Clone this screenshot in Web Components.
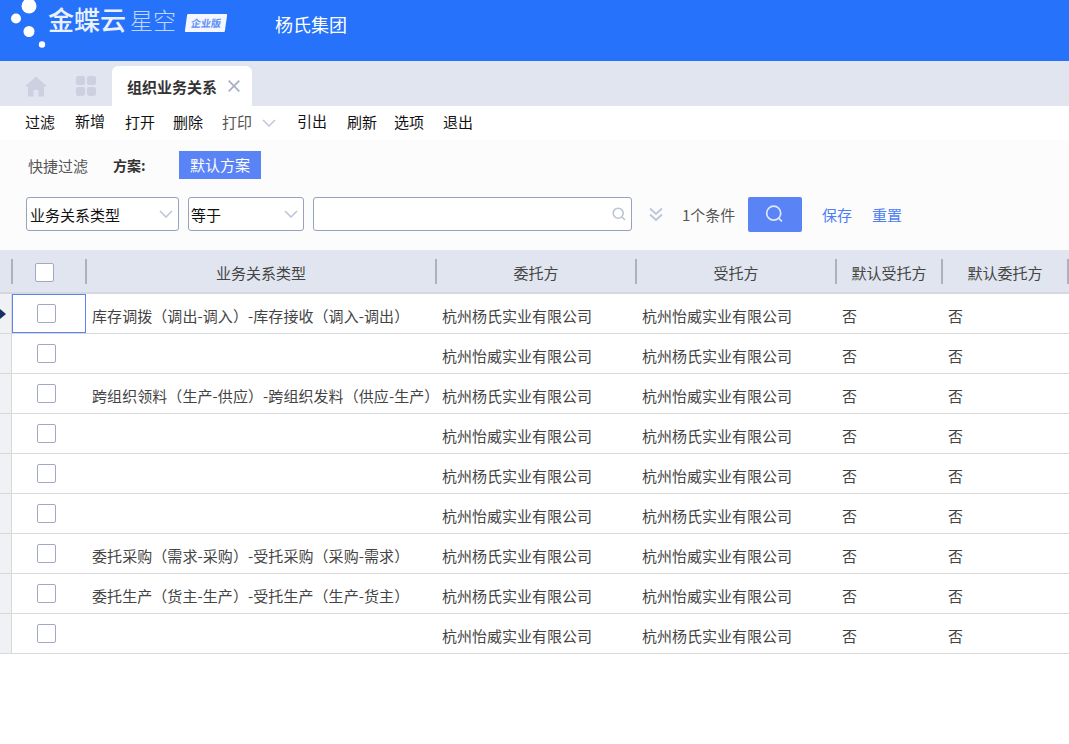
<!DOCTYPE html>
<html lang="zh-CN">
<head>
<meta charset="utf-8">
<title>组织业务关系</title>
<style>
  html, body { margin: 0; padding: 0; background: #fff; }
  body { font: 15px "Noto Sans CJK SC", "Liberation Sans", sans-serif; color: #333; width: 1069px; height: 744px; overflow: hidden; }
</style>
</head>
<body>
<app-header org="杨氏集团"></app-header>
<tab-bar title-text="组织业务关系"></tab-bar>
<tool-bar></tool-bar>
<filter-panel></filter-panel>
<data-grid></data-grid>

<script>
class AppHeader extends HTMLElement {
  connectedCallback() {
    this.attachShadow({ mode: "open" }).innerHTML = `
      <style>
        :host { display: flex; height: 61px; background: #2672fb; color: #fff; box-sizing: border-box; }
        .dots { width: 48px; height: 61px; flex: none; }
        .logo { display: flex; align-items: center; height: 42px; flex: none; }
        .jd { font-size: 26px; font-weight: 500; width: 82px; line-height: 36px; margin-top: -5px; white-space: nowrap; opacity: .9; }
        .xk { font-size: 23px; font-weight: 300; width: 56px; line-height: 36px; margin-top: -5px; white-space: nowrap; opacity: .7; }
        .badge { width: 40px; height: 18px; background: #f4f7ff; color: #5c8ff8; font-size: 10px; font-weight: 700; text-align: center; line-height: 18px; transform: skewX(-8deg); border-radius: 1px; white-space: nowrap; margin-top: 4px; }
        .org { font-size: 18px; margin-left: 49px; line-height: 49px; white-space: nowrap; }
      </style>
      <svg class="dots" viewBox="0 0 48 61" fill="#fff">
        <circle cx="29" cy="6" r="7.5"/><circle cx="16" cy="18.5" r="5"/><circle cx="29" cy="31.5" r="5.5"/><circle cx="42" cy="44.5" r="3.2"/>
      </svg>
      <div class="logo"><span class="jd">金蝶云</span><span class="xk">星空</span><span class="badge">企业版</span></div>
      <div class="org">${this.getAttribute("org")}</div>`;
  }
}

class TabBar extends HTMLElement {
  connectedCallback() {
    this.attachShadow({ mode: "open" }).innerHTML = `
      <style>
        :host { display: flex; height: 45px; background: #e1e5ef; box-sizing: border-box; padding: 5px 0 0 25px; }
        svg { display: block; flex: none; }
        .home { margin-top: 10px; }
        .apps { margin: 10px 0 0 29px; }
        .tab { margin-left: 16px; width: 140px; height: 40px; background: #fff; border-radius: 6px 6px 0 0; display: flex; align-items: center; padding-left: 15px; box-sizing: border-box; }
        .tab span { font-weight: 700; font-size: 15px; color: #333; width: 86px; white-space: nowrap; }
        .close { margin-left: 15px; }
      </style>
      <svg class="home" width="22" height="21" viewBox="0 0 22 21" fill="#ccd0e0"><path d="M11 0.5 L22 10.5 H19 V20.5 H13.5 V14 H8.5 V20.5 H3 V10.5 H0 Z"/></svg>
      <svg class="apps" width="20" height="20" viewBox="0 0 21 21" fill="#ccd0e0">
        <rect x="0" y="0" width="9.5" height="9.5" rx="2.5"/><rect x="11.5" y="0" width="9.5" height="9.5" rx="2.5"/>
        <rect x="0" y="11.5" width="9.5" height="9.5" rx="2.5"/><rect x="11.5" y="11.5" width="9.5" height="9.5" rx="2.5"/>
      </svg>
      <div class="tab"><span>${this.getAttribute("title-text")}</span>
        <svg class="close" width="12" height="12" viewBox="0 0 12 12" stroke="#a9b0c6" stroke-width="1.8" fill="none"><path d="M0.7 0.7 L11.3 11.3 M11.3 0.7 L0.7 11.3"/></svg>
      </div>`;
  }
}

class ToolBar extends HTMLElement {
  connectedCallback() {
    // item = [label, left edge in the bar, vertical nudge]
    const items = [["过滤", 25, -1], ["新增", 75, -2], ["打开", 125, -1], ["删除", 173, -1], ["打印", 222, -1, "#555"], ["引出", 297, -2], ["刷新", 347, -1], ["选项", 394, -1], ["退出", 443, -1]];
    let x = 0, html = "";
    for (const [label, left, nudge, color] of items) {
      html += `<span style="margin-left:${left - x}px;transform:translateY(${nudge}px);${color ? "color:" + color : ""}">${label}</span>`;
      x = left + 30;
      if (label === "打印") {
        html += `<svg style="margin-left:10px" width="14" height="8" viewBox="0 0 14 8" fill="none" stroke="#c3c9d9" stroke-width="1.6"><path d="M1 1 L7 7 L13 1"/></svg>`;
        x = left + 30 + 24;
      }
    }
    this.attachShadow({ mode: "open" }).innerHTML = `
      <style>
        :host { display: flex; align-items: center; height: 34px; background: #fff; color: #111; font-size: 15px; }
        span { width: 30px; flex: none; white-space: nowrap; line-height: 32px; }
      </style>${html}`;
  }
}

class DropSelect extends HTMLElement {
  connectedCallback() {
    this.attachShadow({ mode: "open" }).innerHTML = `
      <style>
        :host { display: flex; align-items: center; justify-content: space-between; height: 34px; box-sizing: border-box; border: 1px solid #97a3bc; border-radius: 3px; background: #fff; color: #111; padding: 0 5px 0 3px; font-size: 15px; white-space: nowrap; }
      </style>
      <slot></slot>
      <svg width="14" height="8" viewBox="0 0 14 8" fill="none" stroke="#bfc6d6" stroke-width="1.6"><path d="M1 1 L7 7 L13 1"/></svg>`;
  }
}

class FilterPanel extends HTMLElement {
  connectedCallback() {
    this.attachShadow({ mode: "open" }).innerHTML = `
      <style>
        :host { display: block; height: 110px; background: #fcfcfd; box-sizing: border-box; padding-top: 11px; }
        .scheme { display: flex; align-items: center; height: 28px; padding-left: 28px; color: #555; white-space: nowrap; font-size: 15px; }
        .scheme b { margin-left: 25px; width: 66px; color: #333; font-weight: 700; font-size: 14px; }
        .scheme .on { width: 82px; height: 28px; line-height: 28px; text-align: center; background: #5a84f5; color: #fff; font-size: 15px; }
        .cond { display: flex; align-items: center; margin-top: 18px; height: 35px; padding-left: 26px; white-space: nowrap; }
        drop-select { align-self: flex-start; }
        drop-select:nth-of-type(1) { width: 153px; }
        drop-select:nth-of-type(2) { width: 116px; margin-left: 9px; padding-left: 2px; }
        .input { align-self: flex-start; width: 319px; height: 34px; margin-left: 9px; box-sizing: border-box; border: 1px solid #97a3bc; border-radius: 3px; background: #fff; display: flex; align-items: center; justify-content: flex-end; padding-right: 5px; }
        .more { margin-left: 17px; }
        .count { margin-left: 19px; width: 54px; color: #555; font-size: 15px; }
        .go { margin-left: 12px; width: 54px; height: 35px; background: #5a84f5; border-radius: 2px; display: flex; align-items: center; justify-content: center; padding-right: 2px; box-sizing: border-box; }
        .link { color: #4d7ef5; width: 30px; font-size: 15px; }
        .link.a { margin-left: 20px; }
        .link.b { margin-left: 20px; }
      </style>
      <div class="scheme"><span>快捷过滤</span><b>方案:</b><span class="on">默认方案</span></div>
      <div class="cond">
        <drop-select>业务关系类型</drop-select>
        <drop-select>等于</drop-select>
        <div class="input">
          <svg width="14" height="14" viewBox="0 0 14 14" fill="none" stroke="#bcc3d3" stroke-width="1.6"><circle cx="6.2" cy="6.2" r="5"/><path d="M10 10 L13 13"/></svg>
        </div>
        <svg class="more" width="14" height="15" viewBox="0 0 14 15" fill="none" stroke="#bcc5d8" stroke-width="1.8"><path d="M1 1.5 L7 7 L13 1.5 M1 7.5 L7 13 L13 7.5"/></svg>
        <span class="count">1个条件</span>
        <div class="go">
          <svg width="19" height="19" viewBox="0 0 19 19" fill="none" stroke="#dfe7fd" stroke-width="1.7"><circle cx="8.7" cy="8.2" r="7"/><path d="M13.8 13.3 L17 16.5"/></svg>
        </div>
        <span class="link a">保存</span><span class="link b">重置</span>
      </div>`;
  }
}

class GridCheck extends HTMLElement {
  connectedCallback() {
    this.attachShadow({ mode: "open" }).innerHTML = `
      <style>
        :host { display: block; width: 19px; height: 19px; box-sizing: border-box; border: 1px solid #a3a9c4; border-radius: 2px; background: #fff; }
      </style>`;
  }
}

class GridHead extends HTMLElement {
  connectedCallback() {
    const titles = ["业务关系类型", "委托方", "受托方", "默认受托方", "默认委托方"];
    this.attachShadow({ mode: "open" }).innerHTML = `
      <style>
        :host { display: grid; grid-template-columns: 11px 74px 350px 200px 200px 106px 126px 1px; height: 44px; box-sizing: border-box; background: #e1e5ef; border-bottom: 2px solid #d5d8e0; padding-top: 9px; color: #444; font-size: 15px; }
        .c { height: 25px; border-left: 2px solid #aeb1bb; display: flex; align-items: center; justify-content: center; white-space: nowrap; box-sizing: border-box; }
        .c.chk { justify-content: flex-start; padding-left: 22px; }
        .c.chk grid-check { margin-top: 2px; }
        .c.txt { padding-top: 2px; }
      </style>
      <div></div>
      <div class="c chk"><grid-check></grid-check></div>
      ${titles.map(t => `<div class="c txt">${t}</div>`).join("")}
      <div class="c"></div>`;
  }
}

class GridRow extends HTMLElement {
  connectedCallback() {
    const current = this.hasAttribute("current");
    this.attachShadow({ mode: "open" }).innerHTML = `
      <style>
        :host { display: grid; grid-template-columns: 12px 74px 350px 200px 200px 106px 127px; height: 40px; box-sizing: border-box; border-bottom: 1px solid #d9d9d9; color: #444; font-size: 15px; }
        .rail { background: #f0f1f5; border-right: 1px solid #d9d9d9; box-sizing: border-box; display: flex; align-items: center; }
        .sel { box-sizing: border-box; padding: 10px 0 0 25px; }
        .sel.cur { outline: 1px solid #5a84f5; outline-offset: -1px; }
        .c { padding: 4px 0 0 6px; display: flex; align-items: center; white-space: nowrap; box-sizing: border-box; }
        .c.kind { letter-spacing: .07px; }
      </style>
      <div class="rail">${current ? `<svg width="6" height="10" viewBox="0 0 6 10" fill="#14325f"><path d="M0 0 L6 5 L0 10 Z"/></svg>` : ""}</div>
      <div class="sel ${current ? "cur" : ""}"><grid-check></grid-check></div>
      <div class="c kind">${this.getAttribute("kind") || ""}</div>
      <div class="c">${this.getAttribute("from")}</div>
      <div class="c">${this.getAttribute("to")}</div>
      <div class="c">否</div>
      <div class="c">否</div>`;
  }
}

class DataGrid extends HTMLElement {
  connectedCallback() {
    const A = "杭州杨氏实业有限公司", B = "杭州怡威实业有限公司";
    const rows = [
      ["库存调拨（调出-调入）-库存接收（调入-调出）", A, B],
      ["", B, A],
      ["跨组织领料（生产-供应）-跨组织发料（供应-生产）", A, B],
      ["", B, A],
      ["", A, B],
      ["", B, A],
      ["委托采购（需求-采购）-受托采购（采购-需求）", A, B],
      ["委托生产（货主-生产）-受托生产（生产-货主）", A, B],
      ["", B, A],
    ];
    this.attachShadow({ mode: "open" }).innerHTML = `
      <style>:host { display: block; }</style>
      <grid-head></grid-head>
      ${rows.map((r, i) => `<grid-row ${i === 0 ? "current" : ""} kind="${r[0]}" from="${r[1]}" to="${r[2]}"></grid-row>`).join("")}`;
  }
}

customElements.define("grid-check", GridCheck);
customElements.define("grid-head", GridHead);
customElements.define("grid-row", GridRow);
customElements.define("data-grid", DataGrid);
customElements.define("drop-select", DropSelect);
customElements.define("filter-panel", FilterPanel);
customElements.define("tool-bar", ToolBar);
customElements.define("tab-bar", TabBar);
customElements.define("app-header", AppHeader);
</script>
</body>
</html>
